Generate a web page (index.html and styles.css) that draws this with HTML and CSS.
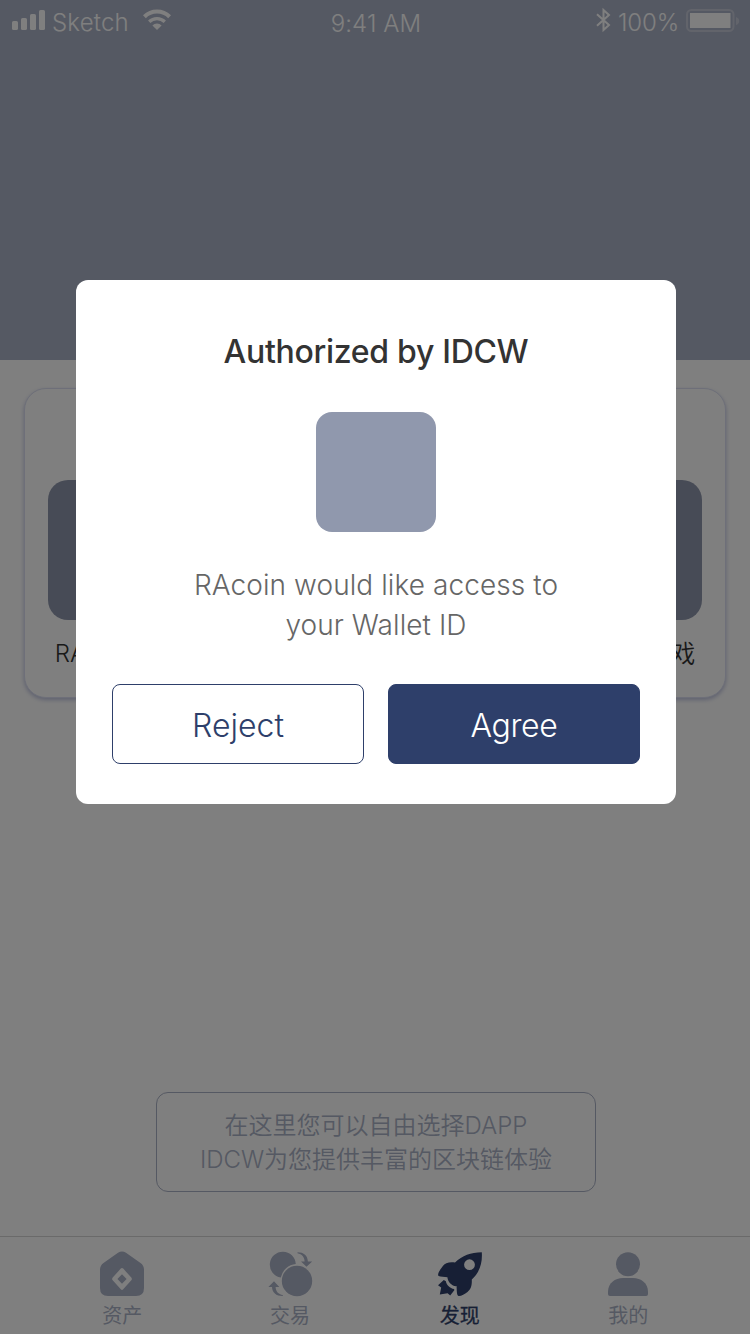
FILE: index.html
```html
<!DOCTYPE html>
<html lang="zh-CN">
<head>
<meta charset="utf-8">
<title>IDCW</title>
<link rel="stylesheet" href="styles.css">
</head>
<body>
<div class="screen">
  <header class="hero">
    <div class="status">
      <div class="status-left">
        <svg class="signal" width="33" height="20" viewBox="0 0 33 20" fill="currentColor"><rect x="0" y="11" width="6" height="9" rx="1.6"/><rect x="9" y="8" width="6" height="12" rx="1.6"/><rect x="18" y="4" width="6" height="16" rx="1.6"/><rect x="27" y="0" width="6" height="20" rx="1.6"/></svg>
        <span class="carrier">Sketch</span>
        <svg class="wifi" width="28" height="20" viewBox="0 0 28 20"><path d="M1.400 6.700A18 18 0 0 1 26.600 6.700" fill="none" stroke="currentColor" stroke-width="4"/><path d="M6.200 11.800A11.200 11.200 0 0 1 21.800 11.800" fill="none" stroke="currentColor" stroke-width="3.300"/><path d="M14 20L9.400 15.400A6.600 6.600 0 0 1 18.600 15.400Z" fill="currentColor"/></svg>
      </div>
      <span class="time">9:41 AM</span>
      <div class="status-right">
        <svg class="bluetooth" width="15" height="24" viewBox="0 0 15 24" fill="none" stroke="currentColor" stroke-width="2"><path d="M1 6.200L13 17L7.500 22V2L13 7L1 17.800"/></svg>
        <span class="percent">100%</span>
        <svg class="battery" width="54" height="24" viewBox="0 0 54 24"><rect x="1" y="1" width="46.500" height="21" rx="4.500" fill="none" stroke="#fff" stroke-opacity=".3" stroke-width="2"/><rect x="4" y="4" width="40.500" height="15" fill="#fff"/><path d="M50 8Q53.200 9 53.200 12T50 16Z" fill="#fff" fill-opacity=".3"/></svg>
      </div>
    </div>
  </header>
  <main class="content">
    <section class="card">
      <div class="app"><div class="app-tile"></div><span class="app-name">RAcoin游戏</span></div>
      <div class="app"><div class="app-tile"></div><span class="app-name">RAcoin游戏</span></div>
    </section>
    <p class="hint">在这里您可以自由选择DAPP<br>IDCW为您提供丰富的区块链体验</p>
  </main>
  <nav class="tabs">
    <a class="tab">
      <svg width="44" height="44" viewBox="0 0 44 44" fill="currentColor"><path fill-rule="evenodd" d="M18 .8Q22-1.700 26 .8L40.500 10.900Q44 13.400 44 17.500V36Q44 44 36 44H8Q0 44 0 36V17.500Q0 13.400 3.500 10.900ZM20.800 16.600L12.700 25.600Q11.600 27 12.700 28.300L20.800 37.300Q22 38.500 23.200 37.300L31.300 28.300Q32.400 27 31.300 25.600L23.200 16.600Q22 15.500 20.800 16.600ZM22 22.300L26.600 27L22 31.700L17.400 27Z"/></svg>
      <span>资产</span>
    </a>
    <a class="tab">
      <svg width="44" height="44" viewBox="0 0 44 44" fill="currentColor"><path d="M11.800 25.500A13 13 0 1 1 26.800 12A17 17 0 0 0 11.800 25.500Z"/><circle cx="28" cy="29" r="15.200"/><path d="M28.500 .2C35 .2 38.600 3.600 38.900 9.400H43.200L37.500 14.800L32 9.400H35.600C35.500 5 33 2 28.500 1.200Z"/><path d="M13.800 44C7 44 3.200 40.600 3 35H-.6L5 29.200L10.300 35H6.600C6.800 39.500 9.300 42.300 13.800 43Z"/></svg>
      <span class="trade-label">交易</span>
    </a>
    <a class="tab tab-active">
      <svg width="44" height="44" viewBox="0 0 44 44" fill="currentColor"><path fill-rule="evenodd" d="M43.800 .3C44.500 11 42 20 33.800 27.500C34 33 33.300 37 29.500 40C26.500 42.500 23 44.200 20.500 43.900C18.500 43.500 18.900 38 18.500 34.100C14.500 34.500 9.800 30.500 9.400 25.300C6.500 25.200 2.500 24.700 .6 24.100C-1 22.500 1.500 18.500 4.500 14.500C7 11 11.500 9.700 17 10.600C24.500 3.500 32.500 .4 43.800 .3ZM31.500 7.300A5.400 5.400 0 1 0 31.500 18.100A5.400 5.400 0 1 0 31.500 7.300Z"/><path d="M5.800 28L7.900 29.200C8.500 33 12 36.200 16.100 37L16.300 38.200L12.200 43.500L9.600 41.200L1.800 42.500L3.200 35.500L0 33.200Z"/></svg>
      <span>发现</span>
    </a>
    <a class="tab">
      <svg width="44" height="44" viewBox="0 0 44 44" fill="currentColor"><circle cx="22" cy="12.200" r="12"/><path d="M2 42V40C2 31 9 26 17 26H27C35 26 42 31 42 40V42Q42 44 40 44H4Q2 44 2 42Z"/></svg>
      <span>我的</span>
    </a>
  </nav>
  <div class="overlay">
    <div class="dialog" role="dialog">
      <h1 class="dialog-title">Authorized by IDCW</h1>
      <div class="dialog-icon"></div>
      <p class="dialog-text">RAcoin would like access to<br>your Wallet ID</p>
      <div class="actions">
        <button class="button button-outline">Reject</button>
        <button class="button button-solid">Agree</button>
      </div>
    </div>
  </div>
</div>
</body>
</html>
```

FILE: styles.css
```css
* { box-sizing: border-box; }
body { margin: 0; font-family: Inter, "Noto Sans CJK SC", sans-serif; }
svg { display: block; flex: none; overflow: visible; }
.screen { position: relative; width: 750px; height: 1334px; display: flex; flex-direction: column; background: #fff; overflow: hidden; }
.hero { height: 360px; background: #abb2c6; }
.status { display: grid; grid-template-columns: 1fr auto 1fr; height: 40px; padding: 0 10px 0 12px; color: #fff; font-size: 24px; line-height: 46px; }
.status-left, .status-right { display: flex; align-items: flex-start; }
.status-right { justify-content: flex-end; }
.signal { margin-top: 10px; }
.carrier { margin-left: 7px; width: 91px; font-weight: 350; letter-spacing: .2px; }
.wifi { margin-top: 10px; }
.time { line-height: 48px; font-weight: 350; letter-spacing: .1px; }
.bluetooth { margin: 8px 7px 0 0; }
.percent { width: 68px; font-weight: 350; letter-spacing: -.1px; }
.battery { margin-top: 9px; }
.content { height: 876px; padding: 28px 24px 44px; display: flex; flex-direction: column; justify-content: space-between; }
.card { width: 702px; height: 310px; padding: 91px 23px 0; border: 1px solid #dcdff2; border-radius: 22px; display: flex; justify-content: space-between; box-shadow: 0 2px 4px rgba(70,80,160,.35); background: #fff; }
.app { width: 140px; display: flex; flex-direction: column; align-items: center; }
.app-tile { width: 140px; height: 140px; border-radius: 20px; background: #8f97ad; }
.app-name { margin-top: 17px; font-size: 24px; line-height: 34px; font-weight: 350; color: #333; white-space: nowrap; }
.hint { margin: 0 0 0 132px; width: 440px; height: 100px; padding: 16px 0; border: 1px solid #abb2c6; border-radius: 12px; text-align: center; font-size: 24px; line-height: 34px; font-weight: 350; color: #abb2c6; }
.tabs { height: 98px; padding: 15px 38px 0; border-top: 1px solid #d4d4d4; display: grid; grid-template-columns: repeat(4, 168.670px); }
.tab { display: flex; flex-direction: column; align-items: center; gap: 6px; font-size: 20px; line-height: 28px; color: #abb2c6; }
.trade-label { padding-right: 2px; }
.tab-active { color: #2e3f6a; }
.tab-active span { -webkit-text-stroke: .3px currentColor; }
.overlay { position: absolute; inset: 0; padding: 280px 74px 0 76px; background: rgba(0,0,0,.5); }
.dialog { height: 524px; padding: 47px 36px 40px; border-radius: 12px; background: #fff; display: flex; flex-direction: column; align-items: center; }
.dialog-title { margin: 0; font-size: 32px; line-height: 50px; font-weight: 500; letter-spacing: -.3px; color: #333; white-space: nowrap; }
.dialog-icon { margin-top: 35px; width: 120px; height: 120px; border-radius: 16px; background: #9098ad; }
.dialog-text { margin: 33px 0 0; font-size: 28px; line-height: 40px; font-weight: 350; letter-spacing: .08px; color: #666; text-align: center; white-space: nowrap; }
.actions { margin-top: 39px; width: 528px; display: grid; grid-template-columns: 1fr 1fr; gap: 24px; }
.button { height: 80px; padding: 2px 0 0; border: 1px solid #2e3f6a; border-radius: 8px; font-family: inherit; font-size: 32px; font-weight: 350; }
.button-outline { background: #fff; color: #2e3f6a; }
.button-solid { background: #2e3f6a; color: #fff; letter-spacing: -.3px; }
```
